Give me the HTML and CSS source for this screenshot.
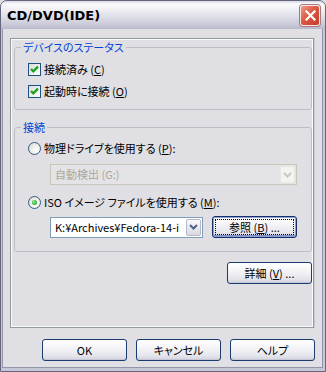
FILE: index.html
```html
<!DOCTYPE html>
<html lang="ja">
<head>
<meta charset="utf-8">
<title>CD/DVD(IDE)</title>
<link rel="stylesheet" href="styles.css">
</head>
<body>
<div class="window">
  <div class="titlebar">
    <span class="title">CD/DVD(IDE)</span>
    <span class="close"><svg width="11" height="11" viewBox="0 0 11 11"><path d="M1.5 1.5 L9.5 9.5 M9.5 1.5 L1.5 9.5" stroke="#fff" stroke-width="2.2" stroke-linecap="square"/></svg></span>
  </div>
  <div class="client">
    <div class="panel">
      <fieldset class="group g1">
        <legend>デバイスのステータス</legend>
        <div class="row"><span class="cb"><svg width="11" height="11" viewBox="0 0 11 11"><path d="M2 5 L4.3 7.4 L9 2.6" fill="none" stroke="#21A121" stroke-width="2.3"/></svg></span><span>接続済み (<u>C</u>)</span></div>
        <div class="row"><span class="cb"><svg width="11" height="11" viewBox="0 0 11 11"><path d="M2 5 L4.3 7.4 L9 2.6" fill="none" stroke="#21A121" stroke-width="2.3"/></svg></span><span>起動時に接続 (<u>O</u>)</span></div>
      </fieldset>
      <fieldset class="group g2">
        <legend>接続</legend>
        <div class="row"><span class="rb"></span><span>物理ドライブを使用する (<u>P</u>):</span></div>
        <div class="combo disabled"><span class="combo-text">自動検出 (G:)</span><span class="drop"><svg width="9" height="6" viewBox="0 0 9 6"><path d="M1 1 L4.5 4.5 L8 1" fill="none" stroke="#C9C7BA" stroke-width="2"/></svg></span></div>
        <div class="row r2"><span class="rb on"></span><span>ISO イメージ ファイルを使用する (<u>M</u>):</span></div>
        <div class="pathrow">
          <div class="combo path"><span class="combo-text">K:¥Archives¥Fedora-14-i</span><span class="drop"><svg width="9" height="6" viewBox="0 0 9 6"><path d="M1 1 L4.5 4.5 L8 1" fill="none" stroke="#4D6185" stroke-width="2"/></svg></span></div>
          <button class="btn default">参照 (<u>B</u>) ...</button>
        </div>
      </fieldset>
      <div class="adv"><button class="btn">詳細 (<u>V</u>) ...</button></div>
    </div>
    <div class="actions">
      <button class="btn">OK</button>
      <button class="btn">キャンセル</button>
      <button class="btn">ヘルプ</button>
    </div>
  </div>
</div>
</body>
</html>
```
FILE: styles.css
```css
* { box-sizing: border-box; }
html, body { margin: 0; padding: 0; background: #E0DFE3; }
body {
  font-family: "Noto Sans CJK JP", "Noto Sans", sans-serif;
  font-size: 11px;
  color: #000;
  font-feature-settings: "palt";
}
u { text-underline-offset: 1px; }

.window {
  width: 326px;
  height: 372px;
  border: 1px solid #65657E;
  border-radius: 7px 7px 0 0;
  background: #C6C6D6;
  display: flex;
  flex-direction: column;
  overflow: hidden;
}
.titlebar {
  height: 28px;
  flex: none;
  display: flex;
  align-items: center;
  justify-content: space-between;
  padding: 0 5px 0 6px;
  background: linear-gradient(to bottom, #D6D6E2 0px, #FBFBFD 3px, #EEEEF3 9px, #DEDEE8 16px, #C8C8D8 24px, #B8B8CC 28px);
}
.title {
  font-family: "DejaVu Sans", sans-serif;
  font-weight: bold;
  font-size: 13px;
  color: #000;
}
.close {
  width: 20px;
  height: 21px;
  border: 1px solid #F4E4E4;
  border-radius: 3px;
  background: linear-gradient(135deg, #EE9C88 0%, #DC5A45 45%, #C6392A 100%);
  box-shadow: 0 0 0 1px #A87A80;
  display: flex;
  align-items: center;
  justify-content: center;
}
.client {
  flex: 1;
  margin: 0 2px 3px 1px;
  border: 1px solid #9494AA;
  border-top: 0;
  background: #E0DFE3;
  padding: 9px 0 0 7px;
  display: flex;
  flex-direction: column;
}
.panel {
  width: 304px;
  height: 290px;
  flex: none;
  border: 1px solid #919B9C;
  box-shadow: inset 0 0 0 1px #FBFBFD, 1px 0 0 #C9C9D2;
  padding: 2px 0 0 3px;
}
.group {
  margin: 0;
  padding: 0;
  min-width: 0;
  width: 298px;
  border: 1px solid #BDBDC6;
  border-radius: 3px;
}
.group legend {
  margin-left: 6px;
  padding: 0 2px;
  line-height: 12px;
  color: #0046D5;
}
.g1 { padding: 5px 0 7px 0; }
.g2 { margin-top: 11px; padding: 4px 0 13px 0; }

.row {
  height: 22px;
  margin-left: 13px;
  display: flex;
  align-items: center;
  gap: 3px;
  white-space: nowrap;
}
.r2 { margin-top: 6px; }
.cb {
  width: 13px;
  height: 13px;
  flex: none;
  border: 1px solid #1C5180;
  background: linear-gradient(135deg, #DCDCD7, #FFFFFF);
  display: flex;
}
.rb {
  width: 13px;
  height: 13px;
  flex: none;
  border: 1px solid #2F5B8C;
  border-radius: 50%;
  background: radial-gradient(circle at 65% 65%, #FFFFFF 0%, #F0F0EC 40%, #D8D8D2 100%);
  display: flex;
  align-items: center;
  justify-content: center;
}
.rb.on::after {
  content: "";
  width: 5px;
  height: 5px;
  border-radius: 50%;
  background: radial-gradient(circle at 40% 40%, #A8EFA0 0%, #3CBB3C 50%, #1E9A1E 100%);
}

.combo {
  height: 21px;
  border: 1px solid #7F9DB9;
  background: #fff;
  display: flex;
  align-items: stretch;
  padding: 1px;
  overflow: hidden;
}
.combo-text {
  flex: 1;
  min-width: 0;
  overflow: hidden;
  white-space: nowrap;
  padding-left: 3px;
  line-height: 17px;
}
.drop {
  width: 15px;
  flex: none;
  border: 1px solid #B6B6C6;
  border-radius: 2px;
  background: linear-gradient(to bottom, #FAFAFC, #D8D8E2);
  display: flex;
  align-items: center;
  justify-content: center;
}
.combo.disabled {
  width: 247px;
  margin: 5px 0 0 35px;
  border-color: #C9C7BA;
  background: #E4E3E7;
  color: #ACA899;
}
.combo.disabled .drop {
  border-color: #E8E7E2;
  background: #F3F3F1;
}
.pathrow {
  margin: 3px 0 0 35px;
  height: 22px;
  display: flex;
  align-items: center;
  gap: 9px;
}
.combo.path { width: 153px; }

.btn {
  width: 85px;
  height: 22px;
  flex: none;
  padding: 0;
  font: inherit;
  color: #000;
  border: 1px solid #1C3B6E;
  border-radius: 3px;
  background: linear-gradient(to bottom, #FFFFFF 0%, #F4F4F7 40%, #E4E4EC 80%, #D2D2DE 100%);
  box-shadow: inset 0 -1px 0 #C6C6D4;
}
.btn.default {
  border-color: #18306A;
  box-shadow: inset 0 0 0 1px #8CA0D8, inset 0 -2px 0 #7F90C8;
  outline: 1px dotted #000;
  outline-offset: -4px;
}
.adv {
  width: 298px;
  margin-top: 10px;
  display: flex;
  justify-content: flex-end;
}
.actions {
  margin-top: 11px;
  padding-right: 7px;
  display: flex;
  justify-content: flex-end;
  gap: 9px;
}
```
